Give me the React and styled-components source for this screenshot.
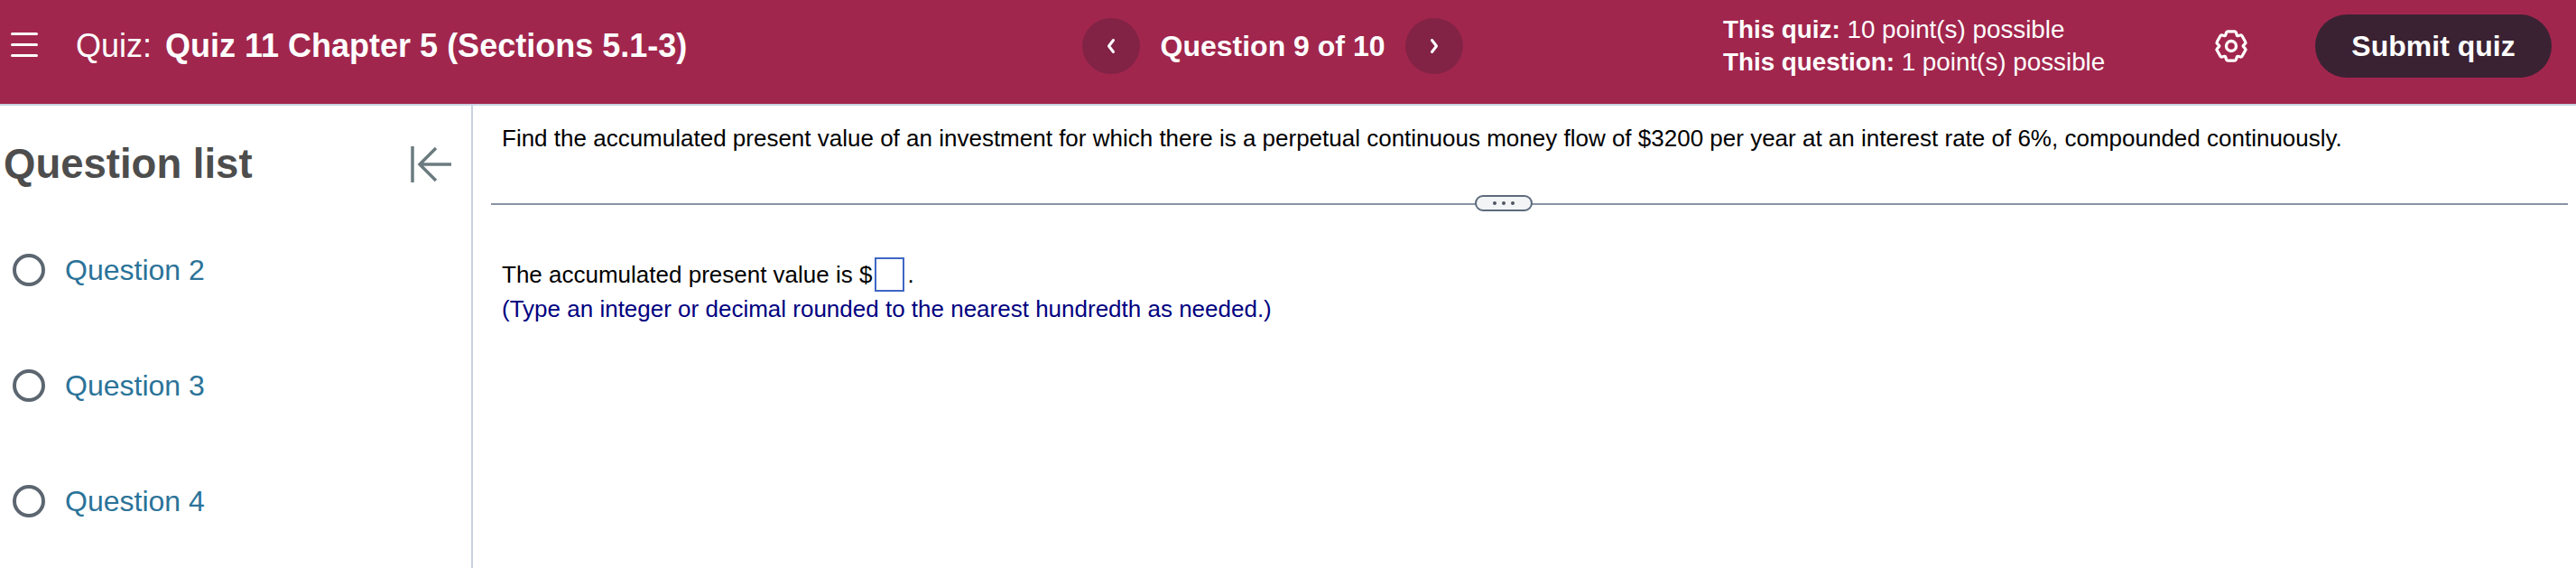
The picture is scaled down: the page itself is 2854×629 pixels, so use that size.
import React from 'react'
import styled, { createGlobalStyle } from 'styled-components'

const Global = createGlobalStyle`
  html, body { margin: 0; padding: 0; background: #fff; }
  body { font-family: "Liberation Sans", Arial, sans-serif; overflow: hidden; }
`

const Pagina = styled.div`
  display: flex;
  flex-direction: column;
  width: 2854px;
  height: 629px;
  overflow: hidden;
`

const Barra = styled.header`
  display: flex;
  align-items: center;
  box-sizing: border-box;
  height: 117px;
  padding-bottom: 13px;
  flex-shrink: 0;
  background: #a1264d;
  border-bottom: 2px solid #c9d1e0;
  color: #fff;
`

const Menu = styled.button`
  display: flex;
  flex-direction: column;
  gap: 9px;
  width: 30px;
  margin: -4px 0 0 12px;
  padding: 0;
  background: none;
  border: 0;
  span {
    height: 3px;
    border-radius: 2px;
    background: #fff;
  }
`

const Titulo = styled.div`
  width: 1115px;
  margin-left: 42px;
  font-size: 36px;
  white-space: nowrap;
  b { margin-left: 5px; }
`

const Nav = styled.nav`
  display: flex;
  align-items: center;
  width: 710px;
  font-size: 32px;
  font-weight: 700;
`

const Flecha = styled.button`
  display: flex;
  align-items: center;
  justify-content: center;
  width: 64px;
  height: 62px;
  padding: 0;
  border: 0;
  border-radius: 50%;
  background: #822346;
  color: #fff;
`

const NavTexto = styled.span`
  width: 294px;
  text-align: center;
  white-space: nowrap;
`

const Puntos = styled.div`
  width: 543px;
  font-size: 27.8px;
  line-height: 36px;
  white-space: nowrap;
`

const Engrane = styled.svg`
  width: 40px;
  height: 40px;
  margin-right: 73px;
`

const Enviar = styled.button`
  width: 262px;
  height: 70px;
  padding: 0;
  border: 0;
  border-radius: 35px;
  background: #3a2233;
  color: #fff;
  font: 700 32px "Liberation Sans", Arial, sans-serif;
`

const Cuerpo = styled.div`
  display: flex;
  flex: 1;
  min-height: 0;
`

const Lateral = styled.aside`
  width: 522px;
  flex-shrink: 0;
  border-right: 2px solid #c9d1e0;
`

const LateralCabeza = styled.div`
  display: flex;
  align-items: center;
  justify-content: space-between;
  height: 130px;
  padding: 0 21px 0 4px;
  h2 {
    margin: 0;
    font-size: 45.5px;
    font-weight: 700;
    color: #4d4d4d;
  }
`

const Lista = styled.ul`
  display: flex;
  flex-direction: column;
  gap: 92px;
  margin: 34px 0 0;
  padding: 0 0 0 14px;
  list-style: none;
`

const Item = styled.li`
  display: flex;
  align-items: center;
  gap: 22px;
  height: 36px;
  font-size: 32px;
  color: #2b7399;
`

const Circulo = styled.span`
  width: 36px;
  height: 36px;
  box-sizing: border-box;
  border: 4px solid #5c6670;
  border-radius: 50%;
`

const Principal = styled.main`
  flex: 1;
  padding: 16px 9px 0 20px;
  font-size: 26px;
  color: #000;
`

const Enunciado = styled.p`
  margin: 0 0 0 12px;
  line-height: 40px;
  white-space: nowrap;
`

const Separador = styled.div`
  position: relative;
  height: 2px;
  margin-top: 52px;
  background: #8a93a5;
`

const Pildora = styled.span`
  position: absolute;
  top: -9px;
  left: 1090px;
  display: flex;
  align-items: center;
  justify-content: center;
  gap: 6px;
  width: 64px;
  height: 18px;
  box-sizing: border-box;
  border: 2px solid #5c6b7d;
  border-radius: 9px;
  background: #f3f4f6;
  i {
    width: 4px;
    height: 4px;
    border-radius: 50%;
    background: #4d5560;
  }
`

const Respuesta = styled.div`
  display: flex;
  align-items: center;
  height: 38px;
  margin: 58px 0 0 12px;
  white-space: nowrap;
`

const Caja = styled.span`
  width: 33px;
  height: 38px;
  box-sizing: border-box;
  margin: 0 3px 0 3px;
  border: 2px solid #3f66c4;
`

const Ayuda = styled.p`
  margin: 0 0 0 12px;
  line-height: 38px;
  color: #000080;
  white-space: nowrap;
`

const preguntas = ['Question 2', 'Question 3', 'Question 4']

export default function App() {
  return (
    <Pagina>
      <Global />
      <Barra>
        <Menu aria-label="Menu"><span /><span /><span /></Menu>
        <Titulo>Quiz: <b>Quiz 11 Chapter 5 (Sections 5.1-3)</b></Titulo>
        <Nav>
          <Flecha aria-label="Previous">
            <svg width="12" height="18" viewBox="0 0 12 18" fill="none" stroke="#fff" strokeWidth="3" strokeLinecap="round" strokeLinejoin="round"><path d="M8.5 2.5 3.5 9l5 6.5" /></svg>
          </Flecha>
          <NavTexto>Question 9 of 10</NavTexto>
          <Flecha aria-label="Next">
            <svg width="12" height="18" viewBox="0 0 12 18" fill="none" stroke="#fff" strokeWidth="3" strokeLinecap="round" strokeLinejoin="round"><path d="m3.5 2.5 5 6.5-5 6.5" /></svg>
          </Flecha>
        </Nav>
        <Puntos>
          <div><b>This quiz:</b> 10 point(s) possible</div>
          <div><b>This question:</b> 1 point(s) possible</div>
        </Puntos>
        <Engrane viewBox="0 0 40 40" fill="none" stroke="#fff" strokeWidth="3.4" strokeLinejoin="round">
          <path d="M16 3h8c1 0 1.6.6 1.8 1.5l.7 2.6c.2.7.7 1.1 1.4 1l2.7-.7c1-.2 1.7.1 2.2 1l3.7 6.6c.5.8.4 1.6-.3 2.3l-1.8 1.8c-.5.5-.5 1.3 0 1.8l1.8 1.8c.7.7.8 1.5.3 2.3l-3.7 6.6c-.5.9-1.2 1.2-2.2 1l-2.7-.7c-.7-.1-1.2.3-1.4 1l-.7 2.6c-.2.9-.8 1.5-1.8 1.5h-8c-1 0-1.6-.6-1.8-1.5l-.7-2.6c-.2-.7-.7-1.1-1.4-1l-2.7.7c-1 .2-1.7-.1-2.2-1l-3.7-6.6c-.5-.8-.4-1.6.3-2.3l1.8-1.8c.5-.5.5-1.3 0-1.8l-1.8-1.8c-.7-.7-.8-1.5-.3-2.3l3.7-6.6c.5-.9 1.2-1.2 2.2-1l2.7.7c.7.1 1.2-.3 1.4-1l.7-2.6C14.4 3.6 15 3 16 3z" transform="translate(1 1) scale(.95)" />
          <circle cx="20" cy="20" r="5.5" />
        </Engrane>
        <Enviar>Submit quiz</Enviar>
      </Barra>
      <Cuerpo>
        <Lateral>
          <LateralCabeza>
            <h2>Question list</h2>
            <svg width="46" height="42" viewBox="0 0 46 42" fill="none" stroke="#6b7b80" strokeWidth="3.5"><path d="M2 1v40" /><path d="M45 21H10M28 3 10 21l18 18" /></svg>
          </LateralCabeza>
          <Lista>
            {preguntas.map((p) => (
              <Item key={p}><Circulo />{p}</Item>
            ))}
          </Lista>
        </Lateral>
        <Principal>
          <Enunciado>Find the accumulated present value of an investment for which there is a perpetual continuous money flow of $3200 per year at an interest rate of 6%, compounded continuously.</Enunciado>
          <Separador><Pildora><i /><i /><i /></Pildora></Separador>
          <Respuesta>The accumulated present value is $<Caja />.</Respuesta>
          <Ayuda>(Type an integer or decimal rounded to the nearest hundredth as needed.)</Ayuda>
        </Principal>
      </Cuerpo>
    </Pagina>
  )
}
